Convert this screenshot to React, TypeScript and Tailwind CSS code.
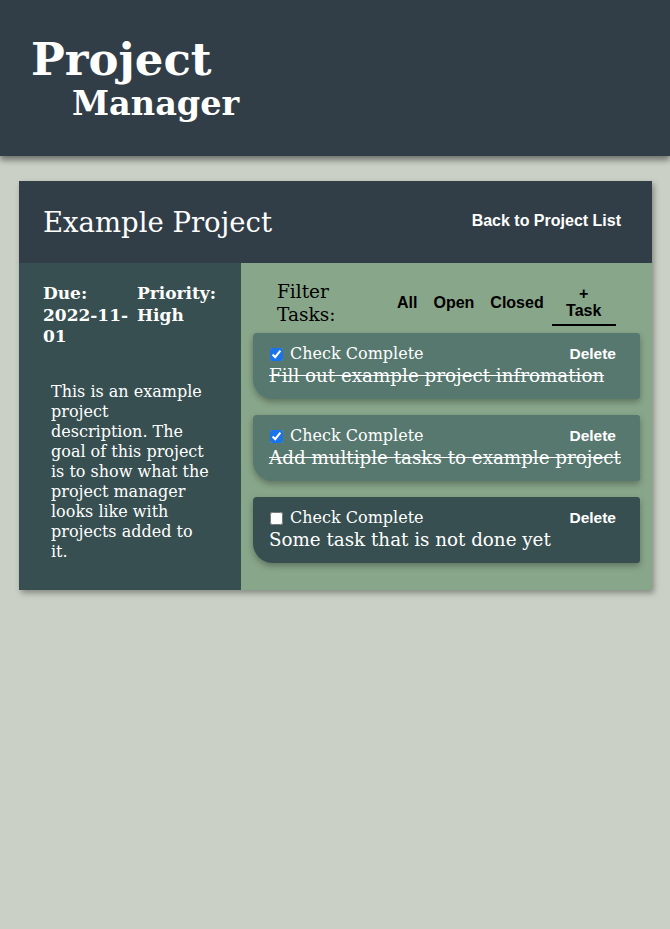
import React, { useState } from 'react';

interface Task {
  id: number;
  text: string;
  done: boolean;
}

const serif = "font-['DejaVu_Serif','Liberation_Serif',serif]";
const sans = "font-['Liberation_Sans',Arial,sans-serif]";

const initialTasks: Task[] = [
  { id: 1, text: 'Fill out example project infromation', done: true },
  { id: 2, text: 'Add multiple tasks to example project', done: true },
  { id: 3, text: 'Some task that is not done yet', done: false },
];

const TaskCard: React.FC<{ task: Task; onToggle: () => void }> = ({ task, onToggle }) => (
  <div
    className={`rounded-tl-[4px] rounded-r-[3px] rounded-bl-[20px] px-4 pt-[11px] pb-[12px] shadow-[0_3px_6px_rgba(0,0,0,0.3)] text-white ${
      task.done ? 'bg-[#57786f]' : 'bg-[#374f51]'
    }`}
  >
    <div className="flex items-center justify-between h-[20px]">
      <label className={`flex items-center gap-[7px] ${serif} text-[16px] leading-[20px]`}>
        <input
          type="checkbox"
          checked={task.done}
          onChange={onToggle}
          className="w-[13px] h-[13px] ml-[1px] accent-[#1a73e8]"
        />
        Check Complete
      </label>
      <button className={`${sans} font-bold text-[15.5px] pr-[8px]`}>Delete</button>
    </div>
    <p
      className={`${serif} text-[18.3px] leading-[22px] mt-[1px] whitespace-nowrap ${
        task.done ? 'line-through' : ''
      }`}
    >
      {task.text}
    </p>
  </div>
);

export default function App() {
  const [tasks, setTasks] = useState(initialTasks);

  const toggle = (id: number) =>
    setTasks(tasks.map((t) => (t.id === id ? { ...t, done: !t.done } : t)));

  return (
    <div className="min-h-[929px] bg-[#cad0c5]">
      {/* Header */}
      <header className="h-[156px] bg-[#323e47] shadow-[0_4px_6px_rgba(0,0,0,0.45)] pl-[31px] pt-[34px] text-white">
        <h1 className={`${serif} font-bold text-[45px] leading-[52px]`}>Project</h1>
        <h2 className={`${serif} font-bold text-[33.5px] leading-[36px] pl-[41px]`}>Manager</h2>
      </header>

      {/* Project card */}
      <main className="pl-[19px] pr-[18px] pt-[25px]">
        <div className="shadow-[2px_3px_6px_rgba(0,0,0,0.35)]">
          <div className="h-[82px] bg-[#323e47] flex items-center justify-between pl-[24px] pr-[31px] text-white">
            <h3 className={`${serif} text-[27.5px] mt-[2px]`}>Example Project</h3>
            <button className={`${sans} font-bold text-[16px] -mt-[2px]`}>Back to Project List</button>
          </div>

          <div className="flex">
            {/* Sidebar */}
            <aside className="w-[222px] shrink-0 bg-[#374f51] text-white pl-[24px] pt-[20px] pb-[28px]">
              <div className={`grid grid-cols-[94px_1fr] ${serif} font-bold text-[17px] leading-[21.5px]`}>
                <p>Due: 2022-11-01</p>
                <p>Priority: High</p>
              </div>
              <p className={`${serif} text-[16px] leading-[20px] mt-[34px] ml-[8px] whitespace-nowrap`}>
                This is an example
                <br />
                project
                <br />
                description. The
                <br />
                goal of this project
                <br />
                is to show what the
                <br />
                project manager
                <br />
                looks like with
                <br />
                projects added to
                <br />
                it.
              </p>
            </aside>

            {/* Tasks */}
            <section className="flex-1 bg-[#88a68a] px-[12px] pt-[17px] pb-[26px]">
              <div className="flex items-center h-[46px] pl-[24px] pr-[24px] mb-[7px]">
                <p className={`${serif} text-[18.5px] leading-[23px] text-black w-[118px]`}>
                  Filter
                  <br />
                  Tasks:
                </p>
                <div className={`flex items-center ${sans} font-bold text-[16px] text-black`}>
                  <button className="px-[2px]">All</button>
                  <button className="ml-[14px]">Open</button>
                  <button className="ml-[16px]">Closed</button>
                  <button className="ml-[8px] w-[64px] leading-[17px] pb-[5px] border-b-2 border-black text-center mt-[4px]">
                    +
                    <br />
                    Task
                  </button>
                </div>
              </div>
              <div className="flex flex-col gap-[16px]">
                {tasks.map((t) => (
                  <TaskCard key={t.id} task={t} onToggle={() => toggle(t.id)} />
                ))}
              </div>
            </section>
          </div>
        </div>
      </main>
    </div>
  );
}
